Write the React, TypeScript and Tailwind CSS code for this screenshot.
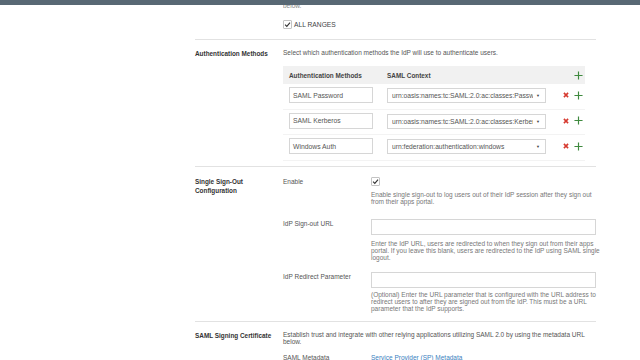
import { ReactNode } from "react";

function Check({ className = "" }: { className?: string }) {
  return (
    <span
      className={
        "flex h-[9px] w-[9px] items-center justify-center rounded-[1px] border border-[#c4c4c4] bg-white " +
        className
      }
    >
      <svg viewBox="0 0 10 10" className="h-[7px] w-[7px]">
        <path d="M1.5 5.2 L4 7.6 L8.6 2.2" fill="none" stroke="#333" strokeWidth="1.6" />
      </svg>
    </span>
  );
}

function Plus() {
  return (
    <svg viewBox="0 0 10 10" className="h-[9px] w-[9px]">
      <path d="M5 0.5 V9.5 M0.5 5 H9.5" stroke="#3f8a3f" strokeWidth="1.3" />
    </svg>
  );
}

function Cross() {
  return (
    <svg viewBox="0 0 10 10" className="h-[6px] w-[6px]">
      <path d="M1.5 1.5 L8.5 8.5 M8.5 1.5 L1.5 8.5" stroke="#d6392f" strokeWidth="2.6" />
    </svg>
  );
}

function TextInput({ value = "", className = "" }: { value?: string; className?: string }) {
  return (
    <div
      className={
        "flex items-center border border-[#d6d6d6] bg-white px-[3px] text-[6.8px] text-[#555] " + className
      }
    >
      {value}
    </div>
  );
}

function Select({ value }: { value: string }) {
  return (
    <div className="mt-[1px] flex h-[15px] w-[159px] items-center border border-[#d6d6d6] bg-white pl-[4px] pr-[5px] text-[6.7px] text-[#555]">
      <span className="w-[141px] overflow-hidden whitespace-nowrap">{value}</span>
      <span className="ml-auto text-[4px] text-[#444]">▼</span>
    </div>
  );
}

function Section({ label, children, className = "" }: { label: ReactNode; children: ReactNode; className?: string }) {
  return (
    <div className={"flex border-t border-[#e2e2e2] " + className}>
      <div className="w-[88px] shrink-0 text-[6.4px] font-bold leading-[9px] text-[#333]">{label}</div>
      <div className="flex-1">{children}</div>
    </div>
  );
}

const methods = [
  { name: "SAML Password", ctx: "urn:oasis:names:tc:SAML:2.0:ac:classes:PasswordProtectedTransport" },
  { name: "SAML Kerberos", ctx: "urn:oasis:names:tc:SAML:2.0:ac:classes:Kerberos" },
  { name: "Windows Auth", ctx: "urn:federation:authentication:windows" },
];

export default function App() {
  return (
    <div className="h-[360px] w-[640px] overflow-hidden bg-white font-['Liberation_Sans',Arial,sans-serif] text-[6.5px] leading-[7px] text-[#555]">
      <div className="h-[5px] bg-[#586874]" />

      <div className="ml-[195px] w-[401px]">
        {/* end of the previous section */}
        <div className="pb-[10px] pl-[88px]">
          <div className="flex h-[3px] items-end overflow-hidden text-[#888]">
            <span className="mb-[-1px]">below.</span>
          </div>
          <div className="mt-[12px] flex items-center gap-[2px]">
            <Check />
            <span className="text-[6.7px] text-[#444]">ALL RANGES</span>
          </div>
        </div>

        {/* Authentication methods */}
        <Section label="Authentication Methods" className="pb-[5px] pt-[9px]">
          <p className="leading-[7px]">Select which authentication methods the IdP will use to authenticate users.</p>
          <div className="mt-[10px] w-[302px]">
            <div className="flex h-[18px] items-center bg-[#f1f1f1] pr-[2px] text-[6.4px] font-bold text-[#444]">
              <span className="w-[104px] pl-[6px]">Authentication Methods</span>
              <span>SAML Context</span>
              <span className="ml-auto">
                <Plus />
              </span>
            </div>
            {methods.map((m) => (
              <div key={m.name} className="flex h-[25.5px] items-start border-b border-[#f3f3f3] pt-[3px]">
                <div className="w-[104px] pl-[6px]">
                  <TextInput value={m.name} className="h-[16px] w-[84px]" />
                </div>
                <Select value={m.ctx} />
                <div className="flex h-[16px] items-center">
                  <span className="ml-[17px]">
                    <Cross />
                  </span>
                  <span className="ml-[5px]">
                    <Plus />
                  </span>
                </div>
              </div>
            ))}
          </div>
        </Section>

        {/* Single sign-out */}
        <Section
          label={
            <>
              Single Sign-Out
              <br />
              Configuration
            </>
          }
          className="pb-[8.5px] pt-[10.5px]"
        >
          <div className="flex">
            <div className="w-[88px] pt-[0.5px]">Enable</div>
            <div className="flex-1">
              <Check />
              <p className="mt-[4.5px] whitespace-nowrap text-[#777]">
                Enable single sign-out to log users out of their IdP session after they sign out
                <br />
                from their apps portal.
              </p>
            </div>
          </div>

          <div className="mt-[14px] flex">
            <div className="w-[88px] pt-[1px]">IdP Sign-out URL</div>
            <div className="flex-1">
              <TextInput className="h-[16px] w-[225px]" />
              <p className="mt-[5px] whitespace-nowrap text-[#777]">
                Enter the IdP URL, users are redirected to when they sign out from their apps
                <br />
                portal. If you leave this blank, users are redirected to the IdP using SAML single
                <br />
                logout.
              </p>
            </div>
          </div>

          <div className="mt-[11.5px] flex">
            <div className="w-[88px] pt-[1px]">IdP Redirect Parameter</div>
            <div className="flex-1">
              <TextInput className="h-[16px] w-[225px]" />
              <p className="mt-[3px] whitespace-nowrap text-[#777]">
                (Optional) Enter the URL parameter that is configured with the URL address to
                <br />
                redirect users to after they are signed out from the IdP. This must be a URL
                <br />
                parameter that the IdP supports.
              </p>
            </div>
          </div>
        </Section>

        {/* SAML signing certificate */}
        <Section label="SAML Signing Certificate" className="pt-[9.5px]">
          <p className="whitespace-nowrap">
            Establish trust and integrate with other relying applications utilizing SAML 2.0 by using the metadata URL
            <br />
            below.
          </p>
          <div className="mt-[9px] flex">
            <div className="w-[88px]">SAML Metadata</div>
            <span className="text-[#3b7fc0]">Service Provider (SP) Metadata</span>
          </div>
        </Section>
      </div>
    </div>
  );
}
